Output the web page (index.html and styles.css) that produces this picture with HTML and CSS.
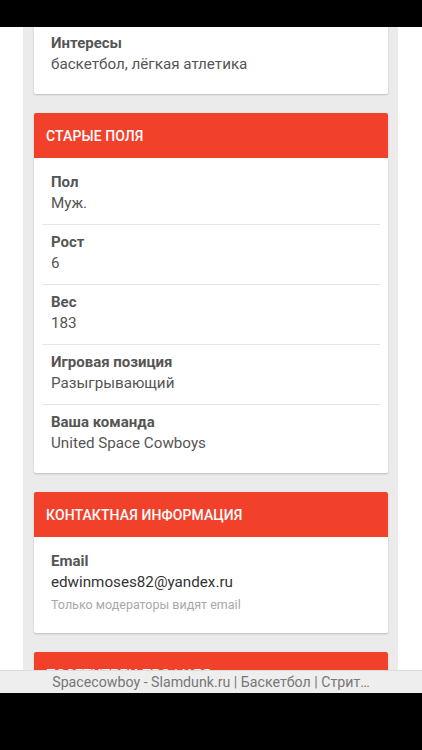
FILE: index.html
```html
<!DOCTYPE html>
<html lang="ru">
<head>
<meta charset="utf-8">
<title>Spacecowboy - Slamdunk.ru</title>
<link rel="stylesheet" href="styles.css">
</head>
<body>
<div class="status-bar"></div>
<main class="column">
  <section class="card card-cut">
    <div class="card-body">
      <div class="row">
        <div class="label">Интересы</div>
        <div class="value">баскетбол, лёгкая атлетика</div>
      </div>
    </div>
  </section>

  <section class="card">
    <h2 class="card-head">Старые поля</h2>
    <div class="card-body">
      <div class="row">
        <div class="label">Пол</div>
        <div class="value">Муж.</div>
      </div>
      <div class="row">
        <div class="label">Рост</div>
        <div class="value">6</div>
      </div>
      <div class="row">
        <div class="label">Вес</div>
        <div class="value">183</div>
      </div>
      <div class="row">
        <div class="label">Игровая позиция</div>
        <div class="value">Разыгрывающий</div>
      </div>
      <div class="row">
        <div class="label">Ваша команда</div>
        <div class="value">United Space Cowboys</div>
      </div>
    </div>
  </section>

  <section class="card">
    <h2 class="card-head">Контактная информация</h2>
    <div class="card-body">
      <div class="row">
        <div class="label">Email</div>
        <div class="value value-dark">edwinmoses82@yandex.ru</div>
        <div class="note">Только модераторы видят email</div>
      </div>
    </div>
  </section>

  <section class="card">
    <h2 class="card-head">Посетители профиля</h2>
    <div class="card-body">
      <div class="row">
        <div class="label">&nbsp;</div>
        <div class="value">&nbsp;</div>
      </div>
    </div>
  </section>
</main>
<div class="title-bar">Spacecowboy - Slamdunk.ru | Баскетбол | Стрит…</div>
<div class="nav-bar"></div>
</body>
</html>
```

FILE: styles.css
```css
html, body {
  margin: 0;
  padding: 0;
  background: #ffffff;
  font-family: Roboto, "Noto Sans", "Liberation Sans", sans-serif;
}

.status-bar {
  height: 27px;
  background: #000;
}

.column {
  margin: 0 24px 0 23px;
  padding: 0 10px 40px 11px;
  background: #ebebeb;
  min-height: 800px;
}

.card {
  background: #fff;
  border-radius: 2px;
  box-shadow: 0 1px 2px rgba(0, 0, 0, 0.2);
  margin-bottom: 19px;
  overflow: hidden;
}

.card-cut {
  border-top-left-radius: 0;
  border-top-right-radius: 0;
}

.card-cut .card-body {
  padding-top: 0;
}

.card-head {
  margin: 0;
  height: 45px;
  display: flex;
  align-items: center;
  padding: 0 12px;
  background: #f1412a;
  color: #fff;
  font-size: 14px;
  font-weight: 500;
  text-transform: uppercase;
  letter-spacing: 0.1px;
}

.card-body {
  padding: 7px 8px 9px;
}

.row {
  padding: 7px 9px 10px;
  border-bottom: 1px solid #e6e6e6;
}

.card-cut .row {
  padding-top: 6px;
}

.row:last-child {
  border-bottom: none;
}

.label {
  font-weight: 700;
  font-size: 15px;
  line-height: 21px;
  color: #555;
}

.value {
  font-size: 15.2px;
  line-height: 21px;
  color: #555;
}

.value-dark {
  color: #333;
}

.note {
  padding-top: 2px;
  font-size: 12.5px;
  line-height: 19px;
  color: #a8a8a8;
}

.title-bar {
  position: fixed;
  left: 0;
  right: 0;
  top: 670px;
  height: 23px;
  background: #eeeeee;
  border-top: 1px solid #dcdcdc;
  box-sizing: border-box;
  color: #777;
  font-size: 14.2px;
  line-height: 22px;
  text-align: center;
  white-space: nowrap;
}

.nav-bar {
  position: fixed;
  left: 0;
  right: 0;
  top: 693px;
  bottom: 0;
  background: #000;
}
```
